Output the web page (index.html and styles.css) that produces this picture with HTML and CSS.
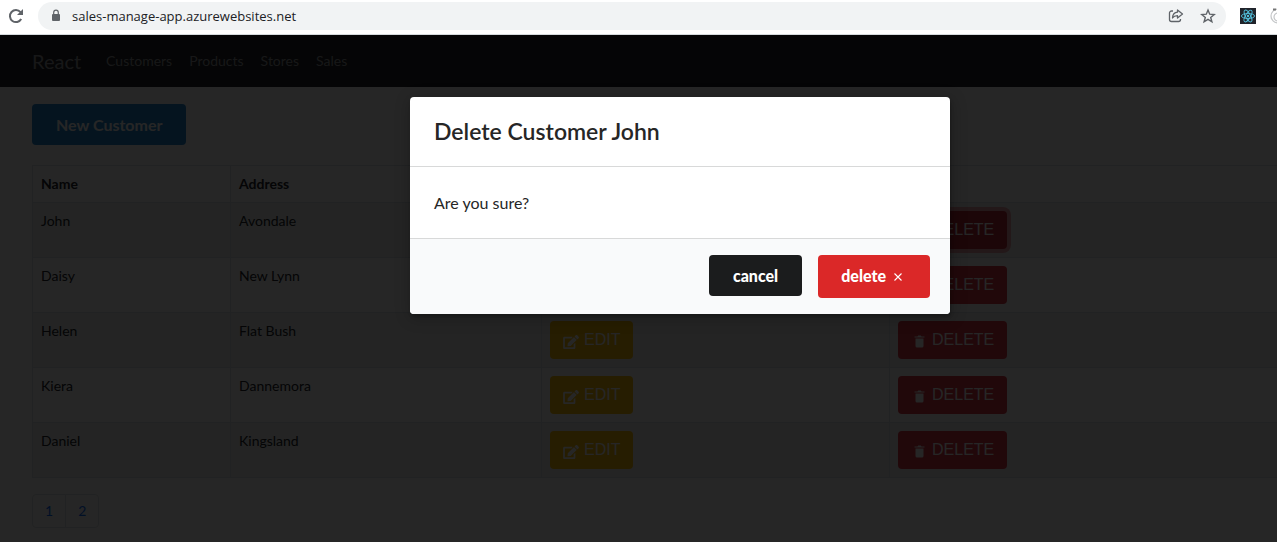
FILE: index.html
```html
<!DOCTYPE html>
<html lang="en">
<head>
<meta charset="utf-8">
<title>Customers</title>
<link rel="stylesheet" href="styles.css">
</head>
<body>
<svg class="sprite" aria-hidden="true">
  <symbol id="edit" viewBox="0 0 576 512"><path d="M402.600 83.200l90.200 90.200c3.800 3.800 3.800 10 0 13.800L274.400 405.600l-92.800 10.300c-12.400 1.400-22.900-9.100-21.500-21.500l10.300-92.800L388.800 83.200c3.800-3.800 10-3.800 13.800 0zm162-22.900l-48.800-48.800c-15.200-15.200-39.900-15.200-55.200 0l-35.400 35.400c-3.800 3.800-3.800 10 0 13.800l90.200 90.200c3.800 3.800 10 3.800 13.800 0l35.400-35.400c15.200-15.300 15.200-40 0-55.200zM384 346.200V448H64V128h229.800c3.200 0 6.200-1.300 8.500-3.500l40-40c7.600-7.600 2.200-20.500-8.500-20.500H48C21.500 64 0 85.500 0 112v352c0 26.500 21.500 48 48 48h352c26.500 0 48-21.500 48-48V306.200c0-10.700-12.900-16-20.500-8.500l-40 40c-2.200 2.300-3.500 5.300-3.500 8.500z"/></symbol>
  <symbol id="trash" viewBox="0 0 16 14"><path d="M3.500 2.500v-1h3l.7-.9h2.600l.7.900h3v1zM4.500 3.500h8V11a1.500 1.500 0 0 1-1.500 1.500H6A1.500 1.500 0 0 1 4.500 11z"/></symbol>
</svg>

<header class="browser">
  <button class="tool" aria-label="Reload">
    <svg width="16" height="16" viewBox="0 0 16 16" fill="none" stroke="#5f6368" stroke-width="2"><path d="M13.200 11A6 6 0 1 1 12.500 4.200"/><path d="M15 1v6H9z" fill="#5f6368" stroke="none"/></svg>
  </button>
  <div class="address">
    <svg width="10" height="14" viewBox="0 0 10 14"><rect y="5" width="8" height="7" rx="1" fill="#5f6368"/><path d="M1.700 5.500v-2a2.300 2.300 0 0 1 4.600 0v2" fill="none" stroke="#5f6368" stroke-width="1.200"/></svg>
    <input class="url" type="text" aria-label="Address" value="sales-manage-app.azurewebsites.net">
    <button class="tool" aria-label="Share">
      <svg width="16" height="16" viewBox="0 0 16 16" fill="none" stroke="#5f6368" stroke-width="1.300" stroke-linejoin="round"><path d="M5 3H3.500A2 2 0 0 0 1.500 5v6.500a2 2 0 0 0 2 2h7a2 2 0 0 0 2-2V11"/><path d="M9.500 2L14.500 6l-5 4V7.700C7 7.700 5.500 8.500 4.500 10c.2-3.500 2-5.500 5-5.800z"/></svg>
    </button>
    <button class="tool" aria-label="Bookmark">
      <svg width="16" height="16" viewBox="0 0 16 16" fill="none" stroke="#5f6368" stroke-width="1.400"><path d="M8 2l1.700 4.200 4.500.3-3.500 2.900 1.200 4.400L8 11.400l-3.900 2.400 1.200-4.400-3.500-2.900 4.500-.3z"/></svg>
    </button>
  </div>
  <button class="tool" aria-label="React Developer Tools">
    <svg width="16" height="16" viewBox="0 0 16 16" fill="none" stroke="#53c1de" stroke-width=".9"><rect width="16" height="16" fill="#20232a" stroke="none"/><ellipse cx="8" cy="8" rx="6.600" ry="2.500"/><ellipse cx="8" cy="8" rx="6.600" ry="2.500" transform="rotate(60 8 8)"/><ellipse cx="8" cy="8" rx="6.600" ry="2.500" transform="rotate(120 8 8)"/><circle cx="8" cy="8" r="1.200" fill="#53c1de" stroke="none"/></svg>
  </button>
  <button class="tool extension" aria-label="Extension">
    <svg width="16" height="16" viewBox="0 0 16 16" fill="none" stroke="#c4c6c8" stroke-width="1.200"><circle cx="8" cy="8" r="7"/><circle cx="8" cy="9" r="4"/><path d="M3 1.500h3" stroke="#777" stroke-width="2"/></svg>
  </button>
</header>

<div class="app">
  <nav class="navbar">
    <a class="brand" href="#">React</a>
    <a href="#">Customers</a>
    <a href="#">Products</a>
    <a href="#">Stores</a>
    <a href="#">Sales</a>
  </nav>
  <main class="content">
    <button class="button primary">New Customer</button>
    <table class="customers">
      <colgroup><col class="col-name"><col class="col-address"><col class="col-edit"><col></colgroup>
      <thead><tr><th>Name</th><th>Address</th><td></td><td></td></tr></thead>
      <tbody>
        <tr><td>John</td><td>Avondale</td><td><button class="btn warning"><svg><use href="#edit"/></svg>EDIT</button></td><td><button class="btn danger focused"><svg><use href="#trash"/></svg>DELETE</button></td></tr>
        <tr><td>Daisy</td><td>New Lynn</td><td><button class="btn warning"><svg><use href="#edit"/></svg>EDIT</button></td><td><button class="btn danger"><svg><use href="#trash"/></svg>DELETE</button></td></tr>
        <tr><td>Helen</td><td>Flat Bush</td><td><button class="btn warning"><svg><use href="#edit"/></svg>EDIT</button></td><td><button class="btn danger"><svg><use href="#trash"/></svg>DELETE</button></td></tr>
        <tr><td>Kiera</td><td>Dannemora</td><td><button class="btn warning"><svg><use href="#edit"/></svg>EDIT</button></td><td><button class="btn danger"><svg><use href="#trash"/></svg>DELETE</button></td></tr>
        <tr><td>Daniel</td><td>Kingsland</td><td><button class="btn warning"><svg><use href="#edit"/></svg>EDIT</button></td><td><button class="btn danger"><svg><use href="#trash"/></svg>DELETE</button></td></tr>
      </tbody>
    </table>
    <nav class="pagination" aria-label="Pages"><a href="#">1</a><a href="#">2</a></nav>
  </main>

  <div class="dimmer">
    <section class="modal" role="dialog" aria-modal="true" aria-labelledby="modal-title">
      <h2 id="modal-title">Delete Customer John</h2>
      <p>Are you sure?</p>
      <div class="actions">
        <button class="button black">cancel</button>
        <button class="button red">delete
          <svg width="8" height="8" viewBox="0 0 8 8" stroke="#fff" stroke-width="1.100"><path d="M.5.5l7 7M7.500.5l-7 7"/></svg>
        </button>
      </div>
    </section>
  </div>
</div>
</body>
</html>
```

FILE: styles.css
```css
* { box-sizing: border-box; }

body {
  display: flex;
  flex-direction: column;
  min-height: 100vh;
  margin: 0;
  overflow: hidden;
  background: #fff;
  color: #212529;
  font: 14px/20px Lato, sans-serif;
}

a { color: inherit; text-decoration: none; }
button { font: inherit; border: 0; cursor: pointer; }
.sprite { display: none; }

/* Browser toolbar */
.browser {
  display: flex;
  align-items: center;
  gap: 14px;
  height: 35px;
  padding: 0 0 3px 8px;
  border-bottom: 1px solid #d5dadd;
}
.tool { display: flex; flex: none; padding: 0; background: none; }
.tool svg { flex: none; }
.extension { width: 7px; overflow: hidden; }
.address {
  display: flex;
  flex: 1;
  align-items: center;
  gap: 16px;
  height: 28px;
  padding: 0 10px 0 14px;
  border-radius: 14px;
  background: #f1f3f4;
}
.url {
  flex: 1;
  min-width: 0;
  margin-left: -6px;
  padding: 0;
  border: 0;
  background: none;
  color: #202124;
  font: 13px/20px "Open Sans", "Noto Sans", sans-serif;
}

/* Page */
.app { position: relative; flex: 1; }
.navbar {
  display: flex;
  align-items: center;
  gap: 17px;
  height: 52px;
  padding: 0 32px;
  background: #212529;
  color: #9b9d9e;
}
.brand { margin-right: 8px; font-size: 20px; }
.content { padding: 17px 0 14px 32px; }

.button {
  padding: 12px 24px;
  border-radius: 4px;
  color: #fff;
  font-size: 16px;
  font-weight: 700;
  line-height: 17px;
}
.primary { background: #2185d0; }
.black { background: #1b1c1d; font-weight: 900; }
.red {
  display: flex;
  align-items: center;
  gap: 8px;
  padding: 12px 28px 14px 23px;
  background: #db2828;
  font-weight: 900;
}
.red svg { margin-top: 3px; }

.customers {
  width: 100%;
  margin: 20px 0 16px;
  border-collapse: collapse;
  table-layout: fixed;
}
.col-name { width: 198px; }
.col-address { width: 311px; }
.col-edit { width: 348px; }
.customers th, .customers td {
  padding: 8px;
  border: 1px solid #dee2e6;
  border-right: 0;
  text-align: left;
  vertical-align: top;
}
.customers tbody tr:nth-child(odd) { background: #f2f2f2; }

.btn {
  display: flex;
  align-items: center;
  gap: 5px;
  padding: 7px 13px;
  border-radius: 4px;
  color: #fff;
  font: 16px/24px "Liberation Sans", Arial, sans-serif;
}
.btn svg { width: 16px; height: 14px; margin-top: 3px; fill: currentColor; }
.warning { background: #ffc107; }
.danger { background: #dc3545; }
.focused { background: #bb2d3b; box-shadow: 0 0 0 4px rgba(225, 83, 97, .5); }

.pagination { display: flex; }
.pagination a {
  padding: 6px 12px;
  border: 1px solid #dee2e6;
  color: #0d6efd;
}
.pagination a:first-child { border-radius: 4px 0 0 4px; }
.pagination a:last-child { margin-left: -1px; border-radius: 0 4px 4px 0; }

/* Confirmation dialog */
.dimmer {
  position: absolute;
  inset: 0;
  display: flex;
  align-items: flex-start;
  justify-content: center;
  padding: 62px 0 0 83px;
  background: rgba(0, 0, 0, .85);
}
.modal {
  width: 540px;
  overflow: hidden;
  border-radius: 4px;
  background: #fff;
  box-shadow: 1px 3px 3px rgba(0, 0, 0, .2), 1px 3px 15px 2px rgba(0, 0, 0, .2);
}
.modal h2 {
  margin: 0;
  padding: 20px 24px;
  border-bottom: 1px solid #d8d9d9;
  color: #262626;
  font-size: 23px;
  font-weight: 600;
  line-height: 29px;
}
.modal p {
  margin: 0;
  padding: 24px;
  color: #262626;
  font-size: 16px;
  line-height: 23px;
}
.actions {
  display: flex;
  align-items: flex-start;
  justify-content: flex-end;
  gap: 16px;
  padding: 16px 20px;
  border-top: 1px solid #d8d9d9;
  background: #f9fafb;
}
```
